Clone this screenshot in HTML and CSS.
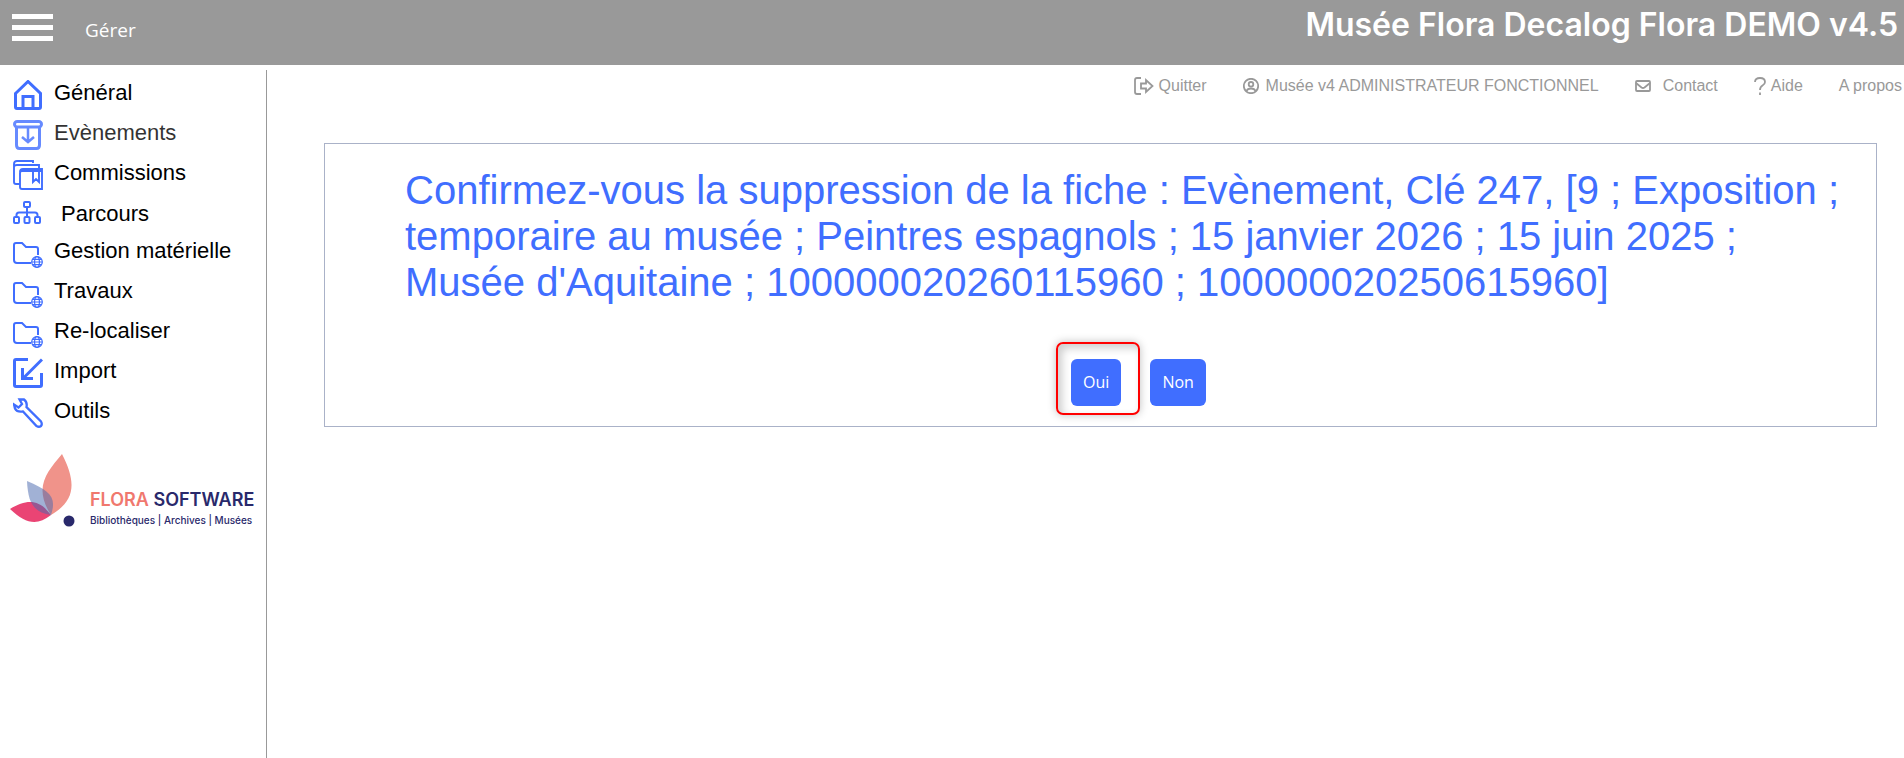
FILE: index.html
```
<!DOCTYPE html>
<html lang="fr">
<head>
    <meta charset="UTF-8">
    <meta name="viewport" content="width=device-width, initial-scale=1.0">
    <title>Musée Flora - Suppression</title>
    <link rel="stylesheet" href="styles.css">
</head>
<body>
    <svg class="sprite" aria-hidden="true">
        <symbol id="folder" viewBox="0 0 30 30">
            <path d="M18 25H4q-3 0-3-3V7q0-2 2-2h6l4 4h10q2 0 2 2v6"/>
            <g stroke-width="1.2">
                <circle cx="24" cy="24" r="5.3"/>
                <ellipse cx="24" cy="24" rx="2.4" ry="5.3"/>
                <path d="M18.7 24h10.6M19.5 21.3h9M19.5 26.7h9"/>
            </g>
        </symbol>
    </svg>

    <header class="header">
        <button type="button" class="burger" aria-label="Menu"><span></span><span></span><span></span></button>
        <a href="#" class="manage">Gérer</a>
        <div class="site-title">Musée Flora Decalog Flora DEMO v4.5</div>
    </header>

    <div class="page">
        <aside class="sidebar">
            <ul class="menu">
                <li><a href="#">
                    <svg viewBox="0 0 30 30"><path d="M2.5 13.5L15 1.5l12.500 12V27q0 1.500-1.500 1.500H4q-1.500 0-1.500-1.500zM10 28V16.500h10V28" stroke-width="3"/></svg>
                    <span>Général</span></a></li>
                <li><a href="#" class="active">
                    <svg viewBox="0 0 30 30"><rect x="1.500" y="1.500" width="27" height="5.500" rx="2.700" stroke-width="3"/><path d="M3.500 7v18q0 3.500 3 3.500h17q3 0 3-3.500V7" stroke-width="3"/><path d="M15 7v14M9 17l6 5 6-5" stroke-width="2.500"/></svg>
                    <span>Evènements</span></a></li>
                <li><a href="#">
                    <svg viewBox="0 0 30 30"><path d="M20 3V1H4Q1 1 1 4v18q0 2 2 2h4M1 7q0-2 3-2h22v4M7 12q0-3 3-3h19v20H9q-2 0-2-2V13q0-2 2-2h20M20 11v11l3-3 3 3V11" stroke-width="1.900"/></svg>
                    <span>Commissions</span></a></li>
                <li class="menu-sub"><a href="#">
                    <svg viewBox="0 0 30 30"><rect x="11" y="2" width="6" height="5" rx="1"/><rect x="1" y="17" width="5" height="6" rx="1"/><rect x="11.500" y="17" width="5" height="6" rx="1"/><rect x="22" y="17" width="5" height="6" rx="1"/><path d="M14 7v10M3.500 17v-2q0-2.500 2.500-2.500h16q2.500 0 2.500 2.500v2"/></svg>
                    <span>Parcours</span></a></li>
                <li><a href="#"><svg><use href="#folder"/></svg><span>Gestion matérielle</span></a></li>
                <li><a href="#"><svg><use href="#folder"/></svg><span>Travaux</span></a></li>
                <li><a href="#"><svg><use href="#folder"/></svg><span>Re-localiser</span></a></li>
                <li><a href="#">
                    <svg viewBox="0 0 30 30"><path d="M15 1.500H3Q1.500 1.500 1.500 3v24q0 1.500 1.500 1.500h24q1.500 0 1.500-1.500V15M29 1.500L10.500 20M9.500 10v10.500H20" stroke-width="3"/></svg>
                    <span>Import</span></a></li>
                <li><a href="#">
                    <svg viewBox="0 0 30 30"><path d="M6.500 1.500l4.500 0q3.500 2.500 2.500 7.500L28 23.500q1.500 2.500 0 4.500-2 1.500-4.500 0L10 13.500Q4 14.500 2 10.500L1 6.500l4.500 3 3.500-3.500z" stroke-width="2.300"/></svg>
                    <span>Outils</span></a></li>
            </ul>

            <div class="logo">
                <svg class="logo-mark" viewBox="0 0 66 74" aria-hidden="true">
                    <path d="M0 55C17 45 29 45 41 61 27 72 16 70 0 55z" fill="#ea4474"/>
                    <path d="M52 0C67 29 65 47 41 61 23 33 37 18 52 0z" fill="#f0938a"/>
                    <path d="M17 27C40 37 47 43 41 61 22 58 18 47 17 27z" fill="#4b69af" fill-opacity=".52"/>
                    <circle cx="59" cy="67" r="5.500" fill="#29296b"/>
                </svg>
                <div class="logo-text">
                    <div class="logo-name"><span>FLORA</span> SOFTWARE</div>
                    <div class="logo-tagline">Bibliothèques | Archives | Musées</div>
                </div>
            </div>
        </aside>

        <main class="content">
            <nav class="toolbar">
                <a href="#" class="quit">
                    <svg width="20" height="18" viewBox="0 0 20 18"><path d="M7 1H3Q1 1 1 3v12q0 2 2 2h4M7 6.500h5V3l6.500 6-6.500 6v-3.500H7z"/></svg>
                    Quitter</a>
                <a href="#" class="user">
                    <svg width="16" height="16" viewBox="0 0 16 16"><circle cx="8" cy="8" r="7.200"/><circle cx="8" cy="6.300" r="2.300"/><path d="M3.500 13q1-2.500 4.500-2.500t4.500 2.500"/></svg>
                    Musée v4 ADMINISTRATEUR FONCTIONNEL</a>
                <a href="#" class="contact">
                    <svg width="16" height="12" viewBox="0 0 16 12"><rect x="1" y="1" width="14" height="10" rx="1"/><path d="M1 3l5.500 4.500q1.500 1 3 0L15 3"/></svg>
                    Contact</a>
                <a href="#" class="help">
                    <svg width="12" height="18" viewBox="0 0 12 18"><path d="M1 5Q1 1 6 1t5 4q0 2-2.500 3.500T6 13M6 15.500V18"/></svg>
                    Aide</a>
                <a href="#">A propos</a>
            </nav>

            <form class="confirm">
                <p class="confirm-message">Confirmez-vous la suppression de la fiche : Evènement, Clé 247, [9 ; Exposition ; temporaire au musée ; Peintres espagnols ; 15 janvier 2026 ; 15 juin 2025 ; Musée d'Aquitaine ; 100000020260115960 ; 100000020250615960]</p>
                <div class="confirm-buttons">
                    <span class="highlight"><button type="button">Oui</button></span>
                    <button type="button">Non</button>
                </div>
            </form>
        </main>
    </div>
</body>
</html>
```
FILE: styles.css
```
* {
    box-sizing: border-box;
}
body {
    margin: 0;
    min-height: 100vh;
    display: flex;
    flex-direction: column;
    font-family: "Liberation Sans", Arial, sans-serif;
    background-color: #fff;
    color: #000;
}
a {
    color: inherit;
    text-decoration: none;
}
svg {
    fill: none;
    stroke: currentColor;
    stroke-width: 2;
    flex-shrink: 0;
}
.sprite {
    position: absolute;
    width: 0;
    height: 0;
}

/* header */
.header {
    display: flex;
    align-items: flex-start;
    height: 65px;
    padding: 0 6px 0 12px;
    background-color: #999;
    color: #fff;
}
.burger {
    display: flex;
    flex-direction: column;
    gap: 6px;
    margin-top: 14px;
    padding: 0;
    width: 41px;
    border: none;
    background: none;
    cursor: pointer;
}
.burger span {
    height: 5px;
    width: 100%;
    background-color: #fff;
}
.manage {
    margin: 17px 0 0 32px;
    font: 19px/26px "Open Sans", sans-serif;
}
.site-title {
    margin: 8px 0 0 auto;
    font: 600 32px/34px Inter, sans-serif;
}

.page {
    display: flex;
    flex: 1;
    padding-top: 5px;
}

/* sidebar */
.sidebar {
    width: 267px;
    flex-shrink: 0;
    padding: 10px 10px 0;
    border-right: 1px solid #999;
}
.menu {
    list-style: none;
    margin: 0;
    padding: 0 0 0 3px;
}
.menu li {
    height: 40px;
}
.menu a {
    display: flex;
    gap: 11px;
    font-size: 22px;
    line-height: 26px;
}
.menu svg {
    width: 30px;
    height: 30px;
    color: #406eff;
}
.menu .active {
    opacity: 0.8;
}
.menu .menu-sub {
    height: 38px;
}
.menu-sub a {
    gap: 18px;
    line-height: 28px;
}
.logo {
    display: flex;
    align-items: flex-end;
    gap: 14px;
    padding-top: 16px;
}
.logo-mark {
    width: 66px;
    height: 74px;
    stroke: none;
}
.logo-text {
    font-family: Inter, sans-serif;
    color: #29296b;
    white-space: nowrap;
}
.logo-name {
    font-size: 18px;
    line-height: 24px;
    font-weight: 600;
}
.logo-name span {
    color: #f0786e;
}
.logo-tagline {
    font-size: 10px;
    line-height: 16px;
    font-weight: 500;
}

/* content */
.content {
    flex: 1;
    padding: 6px 27px 0 57px;
}
.toolbar {
    display: flex;
    justify-content: flex-end;
    gap: 36px;
    margin-right: -25px;
    color: #999;
    font-size: 16px;
    line-height: 20px;
}
.toolbar a {
    display: flex;
    align-items: center;
    gap: 5px;
}
.toolbar .user {
    gap: 7px;
}
.toolbar .contact {
    gap: 12px;
}
.toolbar svg {
    stroke-width: 1.8;
}
.confirm {
    margin-top: 47px;
    padding: 23px 32px 20px 80px;
    border: 1px solid #aab2c8;
}
.confirm-message {
    margin: 0 0 54px;
    font-size: 40px;
    line-height: 46px;
    color: #406eff;
}
.confirm-buttons {
    display: flex;
    justify-content: center;
    gap: 29px;
    padding-left: 28px;
}
.confirm-buttons button {
    padding: 12px;
    border: none;
    border-radius: 6px;
    background-color: #406eff;
    color: #fff;
    font: 16px/23px "Open Sans", sans-serif;
    cursor: pointer;
}
.highlight {
    position: relative;
}
.highlight::after {
    content: "";
    position: absolute;
    inset: -17px -19px -9px -15px;
    border: 2px solid #f00;
    border-radius: 7px;
    box-shadow: 0 0 8px rgba(0, 0, 0, 0.25), inset 4px 4px 8px rgba(0, 0, 0, 0.2);
    pointer-events: none;
}
```
